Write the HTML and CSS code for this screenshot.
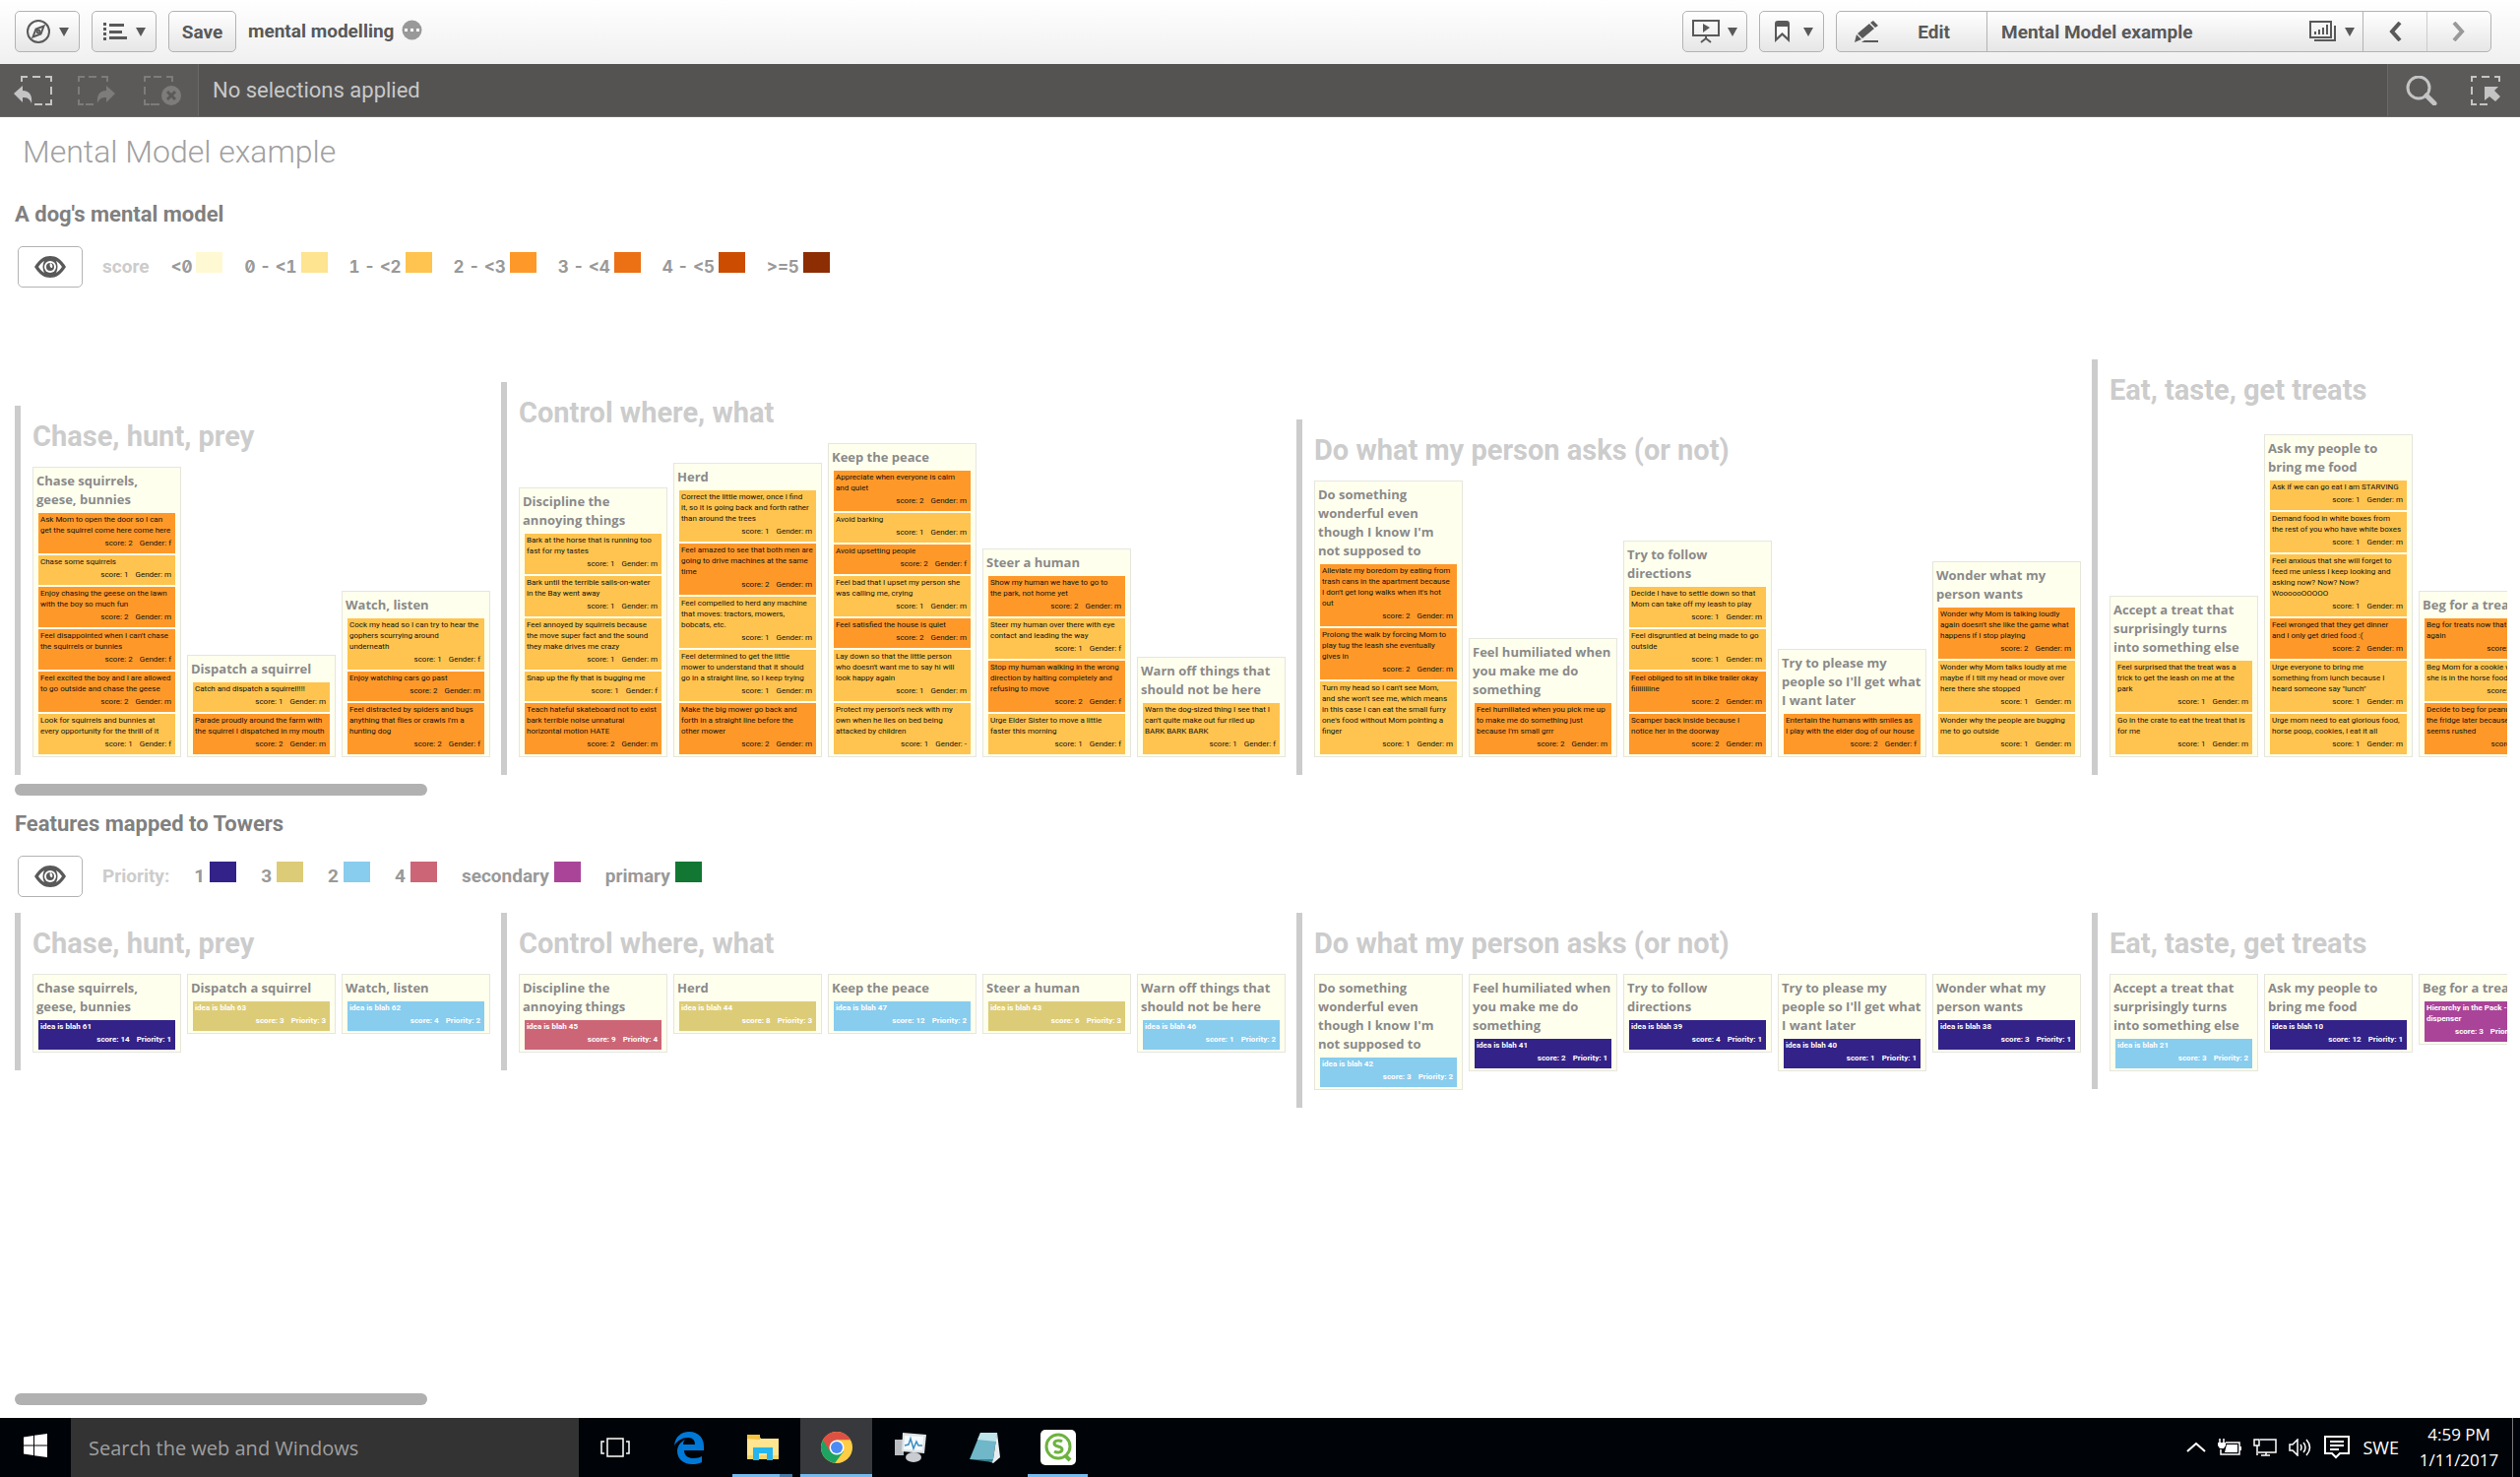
FILE: index.html
```html
<!DOCTYPE html>
<html lang="en">
<head>
<meta charset="utf-8">
<title>mental modelling</title>
<link rel="stylesheet" href="styles.css">
</head>
<body>
<svg class="defs" aria-hidden="true">
  <symbol id="eye" viewBox="0 0 34 24"><path d="M1 12C6 4 11 1 17 1s11 3 16 11c-5 8-10 11-16 11S6 20 1 12z" fill="#595959"/><path d="M5 12c2-3 4-5 6-6-2 4-2 8 0 12-2-1-4-3-6-6zM29 12c-2-3-4-5-6-6 2 4 2 8 0 12 2-1 4-3 6-6z" fill="#fff"/><circle cx="17" cy="12" r="6" fill="#fff"/><circle cx="17" cy="12" r="4" fill="#595959"/><path d="M17 8a4 4 0 0 1 2 5c-2 0-3-2-2-5z" fill="#fff"/></symbol>
  <symbol id="caret" viewBox="0 0 10 9"><path d="M0 0h10L5 9z" fill="#595959"/></symbol>
</svg>

<header class="toolbar">
  <button class="btn icon-btn" aria-label="Navigation">
    <svg width="26" height="24" viewBox="0 0 26 24" fill="none" stroke="#595959" stroke-width="2"><circle cx="13" cy="12" r="11"/><path d="M18.500 6.500l-3 8-8 3 3-8z"/><circle cx="13" cy="12" r="1.500"/></svg>
    <svg width="10" height="9"><use href="#caret"/></svg>
  </button>
  <button class="btn icon-btn" aria-label="Menu">
    <svg width="26" height="18" viewBox="0 0 26 18" fill="#595959"><path d="M1 0h3v3H1zM1 5h3v3H1zM1 10h3v3H1zM1 15h3v3H1zM7 1h15v3H7zM7 8h13v3H7zM7 14h18v3H7z"/></svg>
    <svg width="10" height="9"><use href="#caret"/></svg>
  </button>
  <button class="btn save">Save</button>
  <span class="app-name">mental modelling</span>
  <svg class="app-dots" width="21" height="21" viewBox="0 0 21 21"><circle cx="10.500" cy="10.500" r="10" fill="#999"/><path d="M3 9h3v3H3zM9 9h3v3H9zM15 9h3v3h-3z" fill="#fff"/></svg>
  <div class="tools">
    <button class="btn icon-btn" aria-label="Stories">
      <svg width="28" height="24" viewBox="0 0 28 24" fill="none" stroke="#595959" stroke-width="2"><path d="M1 1h26v15H1zM14 16v3M9 23l5-4 5 4"/><path d="M11 4l7 4-7 5z" fill="#595959" stroke="none"/></svg>
      <svg width="10" height="9"><use href="#caret"/></svg>
    </button>
    <button class="btn icon-btn" aria-label="Bookmarks">
      <svg width="26" height="24" viewBox="0 0 26 24"><path d="M5 23V4q0-3 3-3h9q3 0 3 3v19l-7.500-7z" fill="#595959"/><path d="M7 7h11v11l-5.500-5L7 18z" fill="#fafafa"/></svg>
      <svg width="10" height="9"><use href="#caret"/></svg>
    </button>
    <div class="group-bar">
      <button class="edit"><svg width="26" height="24" viewBox="0 0 26 24" fill="#595959"><path d="M4 14L16 4l5 5L9 19zM17 3l3-2 5 5-3 2zM3 15l5 5-7 3zM11 21h14v2H8z"/></svg><span>Edit</span></button>
      <button class="sheet"><span>Mental Model example</span><span class="sheet-icons"><svg width="28" height="22" viewBox="0 0 28 22" fill="none" stroke="#595959" stroke-width="2"><path d="M1 1h21v16H1zM5 20h21V5M6 14v-3M10 14V9M14 14V7M18 14V4"/></svg><svg width="10" height="9"><use href="#caret"/></svg></span></button>
      <button class="step" aria-label="Previous sheet"><svg width="14" height="20" viewBox="0 0 14 20" fill="none" stroke="#595959" stroke-width="4"><path d="M12 1L4 10l8 9"/></svg></button>
      <button class="step off" aria-label="Next sheet"><svg width="14" height="20" viewBox="0 0 14 20" fill="none" stroke="#999" stroke-width="4"><path d="M2 1l8 9-8 9"/></svg></button>
    </div>
  </div>
</header>

<nav class="selections">
  <div class="sel-tools">
    <button aria-label="Step back"><svg width="40" height="30" viewBox="0 0 40 30" fill="none" stroke="#c4c4c4" stroke-width="2"><path d="M8 6V1h6M19 1h8M32 1h6v5M38 11v8M38 24v5h-6M29 29h-8"/><path d="M0 18l9-8v5c7 0 10 5 9 13-2-5-4-6-9-6v5z" fill="#c4c4c4" stroke="none"/></svg></button>
    <button aria-label="Step forward"><svg width="40" height="30" viewBox="2 0 40 30" fill="none" stroke="#7d7c7b" stroke-width="2"><path d="M3 6V1h6M13 1h8M26 1h6v5M3 11v8M3 24v5h5M10 29h8"/><path d="M40 18l-9-8v5c-7 0-10 5-9 13 2-5 4-6 9-6v5z" fill="#7d7c7b" stroke="none"/></svg></button>
    <button aria-label="Clear all selections"><svg width="40" height="30" viewBox="3 0 40 30" fill="none" stroke="#7d7c7b" stroke-width="2"><path d="M4 6V1h6M13 1h8M26 1h6v5M4 11v8M4 24v5h5M10 29h9"/><circle cx="31" cy="20" r="10" fill="#7d7c7b" stroke="none"/><path d="M27 16l8 8M35 16l-8 8" stroke="#5b5a58" stroke-width="3"/></svg></button>
  </div>
  <p class="sel-text">No selections applied</p>
  <div class="sel-tools right">
    <button aria-label="Search"><svg width="32" height="30" viewBox="0 0 32 30" fill="none" stroke="#c4c4c4"><circle cx="13" cy="12" r="11" stroke-width="3"/><path d="M21 20l8 8" stroke-width="5" stroke-linecap="round"/></svg></button>
    <button aria-label="Selections tool"><svg width="32" height="30" viewBox="0 0 32 30" fill="none" stroke="#c4c4c4" stroke-width="2"><path d="M2 6V1h5M12 1h8M25 1h5v5M2 11v8M2 24v5h5M10 29h8"/><path d="M15 11h14l-4 4 6 6-5 5-6-5-5 4z" fill="#c4c4c4" stroke="none"/></svg></button>
  </div>
</nav>

<main>
  <h1>Mental Model example</h1>

  <div class="charts">
  <section class="chart">
    <h2>A dog's mental model</h2>
    <div class="legend-row">
      <button class="btn eye-btn" aria-label="Toggle view"><svg width="34" height="24"><use href="#eye"/></svg></button>
      <ul class="legend ranges">
        <li class="name">score</li>
        <li>&lt;0<i class="sw c0"></i></li>
        <li>0 - &lt;1<i class="sw c1"></i></li>
        <li>1 - &lt;2<i class="sw c2"></i></li>
        <li>2 - &lt;3<i class="sw c3"></i></li>
        <li>3 - &lt;4<i class="sw c4"></i></li>
        <li>4 - &lt;5<i class="sw c5"></i></li>
        <li>&gt;=5<i class="sw c6"></i></li>
      </ul>
    </div>
    <div class="board up">
      <section class="space">
        <h3>Chase, hunt, prey</h3>
        <div class="towers">
          <article class="tower"><h4>Chase squirrels,<br>geese, bunnies</h4>
            <div class="card c3">Ask Mom to open the door so I can<br>get the squirrel come here come here<p><span>score: 2</span><span>Gender: f</span></p></div>
            <div class="card c2">Chase some squirrels<p><span>score: 1</span><span>Gender: m</span></p></div>
            <div class="card c3">Enjoy chasing the geese on the lawn<br>with the boy so much fun<p><span>score: 2</span><span>Gender: m</span></p></div>
            <div class="card c3">Feel disappointed when I can't chase<br>the squirrels or bunnies<p><span>score: 2</span><span>Gender: f</span></p></div>
            <div class="card c3">Feel excited the boy and I are allowed<br>to go outside and chase the geese<p><span>score: 2</span><span>Gender: m</span></p></div>
            <div class="card c2">Look for squirrels and bunnies at<br>every opportunity for the thrill of it<p><span>score: 1</span><span>Gender: f</span></p></div>
          </article>
          <article class="tower"><h4>Dispatch a squirrel</h4>
            <div class="card c2">Catch and dispatch a squirrel!!!!<p><span>score: 1</span><span>Gender: m</span></p></div>
            <div class="card c3">Parade proudly around the farm with<br>the squirrel I dispatched in my mouth<p><span>score: 2</span><span>Gender: m</span></p></div>
          </article>
          <article class="tower"><h4>Watch, listen</h4>
            <div class="card c2">Cock my head so I can try to hear the<br>gophers scurrying around<br>underneath<p><span>score: 1</span><span>Gender: f</span></p></div>
            <div class="card c3">Enjoy watching cars go past<p><span>score: 2</span><span>Gender: m</span></p></div>
            <div class="card c3">Feel distracted by spiders and bugs<br>anything that flies or crawls I'm a<br>hunting dog<p><span>score: 2</span><span>Gender: f</span></p></div>
          </article>
        </div>
      </section>
      <section class="space">
        <h3>Control where, what</h3>
        <div class="towers">
          <article class="tower"><h4>Discipline the<br>annoying things</h4>
            <div class="card c2">Bark at the horse that is running too<br>fast for my tastes<p><span>score: 1</span><span>Gender: m</span></p></div>
            <div class="card c2">Bark until the terrible sails-on-water<br>in the Bay went away<p><span>score: 1</span><span>Gender: m</span></p></div>
            <div class="card c2">Feel annoyed by squirrels because<br>the move super fact and the sound<br>they make drives me crazy<p><span>score: 1</span><span>Gender: m</span></p></div>
            <div class="card c2">Snap up the fly that is bugging me<p><span>score: 1</span><span>Gender: f</span></p></div>
            <div class="card c3">Teach hateful skateboard not to exist<br>bark terrible noise unnatural<br>horizontal motion HATE<p><span>score: 2</span><span>Gender: m</span></p></div>
          </article>
          <article class="tower"><h4>Herd</h4>
            <div class="card c2">Correct the little mower, once I find<br>it, so it is going back and forth rather<br>than around the trees<p><span>score: 1</span><span>Gender: m</span></p></div>
            <div class="card c3">Feel amazed to see that both men are<br>going to drive machines at the same<br>time<p><span>score: 2</span><span>Gender: m</span></p></div>
            <div class="card c2">Feel compelled to herd any machine<br>that moves: tractors, mowers,<br>bobcats, etc.<p><span>score: 1</span><span>Gender: m</span></p></div>
            <div class="card c2">Feel determined to get the little<br>mower to understand that it should<br>go in a straight line, so I keep trying<p><span>score: 1</span><span>Gender: m</span></p></div>
            <div class="card c3">Make the big mower go back and<br>forth in a straight line before the<br>other mower<p><span>score: 2</span><span>Gender: m</span></p></div>
          </article>
          <article class="tower"><h4>Keep the peace</h4>
            <div class="card c3">Appreciate when everyone is calm<br>and quiet<p><span>score: 2</span><span>Gender: m</span></p></div>
            <div class="card c2">Avoid barking<p><span>score: 1</span><span>Gender: m</span></p></div>
            <div class="card c3">Avoid upsetting people<p><span>score: 2</span><span>Gender: f</span></p></div>
            <div class="card c2">Feel bad that I upset my person she<br>was calling me, crying<p><span>score: 1</span><span>Gender: m</span></p></div>
            <div class="card c3">Feel satisfied the house is quiet<p><span>score: 2</span><span>Gender: m</span></p></div>
            <div class="card c2">Lay down so that the little person<br>who doesn't want me to say hi will<br>look happy again<p><span>score: 1</span><span>Gender: m</span></p></div>
            <div class="card c2">Protect my person's neck with my<br>own when he lies on bed being<br>attacked by children<p><span>score: 1</span><span>Gender: -</span></p></div>
          </article>
          <article class="tower"><h4>Steer a human</h4>
            <div class="card c3">Show my human we have to go to<br>the park, not home yet<p><span>score: 2</span><span>Gender: m</span></p></div>
            <div class="card c2">Steer my human over there with eye<br>contact and leading the way<p><span>score: 1</span><span>Gender: f</span></p></div>
            <div class="card c3">Stop my human walking in the wrong<br>direction by halting completely and<br>refusing to move<p><span>score: 2</span><span>Gender: f</span></p></div>
            <div class="card c2">Urge Elder Sister to move a little<br>faster this morning<p><span>score: 1</span><span>Gender: f</span></p></div>
          </article>
          <article class="tower"><h4>Warn off things that<br>should not be here</h4>
            <div class="card c2">Warn the dog-sized thing I see that I<br>can't quite make out fur riled up<br>BARK BARK BARK<p><span>score: 1</span><span>Gender: f</span></p></div>
          </article>
        </div>
      </section>
      <section class="space">
        <h3>Do what my person asks (or not)</h3>
        <div class="towers">
          <article class="tower"><h4>Do something<br>wonderful even<br>though I know I'm<br>not supposed to</h4>
            <div class="card c3">Alleviate my boredom by eating from<br>trash cans in the apartment because<br>I don't get long walks when it's hot<br>out<p><span>score: 2</span><span>Gender: m</span></p></div>
            <div class="card c3">Prolong the walk by forcing Mom to<br>play tug the leash she eventually<br>gives in<p><span>score: 2</span><span>Gender: m</span></p></div>
            <div class="card c2">Turn my head so I can't see Mom,<br>and she won't see me, which means<br>in this case I can eat the small furry<br>one's food without Mom pointing a<br>finger<p><span>score: 1</span><span>Gender: m</span></p></div>
          </article>
          <article class="tower"><h4>Feel humiliated when<br>you make me do<br>something</h4>
            <div class="card c3">Feel humiliated when you pick me up<br>to make me do something just<br>because I'm small grrr<p><span>score: 2</span><span>Gender: m</span></p></div>
          </article>
          <article class="tower"><h4>Try to follow<br>directions</h4>
            <div class="card c2">Decide I have to settle down so that<br>Mom can take off my leash to play<p><span>score: 1</span><span>Gender: m</span></p></div>
            <div class="card c2">Feel disgruntled at being made to go<br>outside<p><span>score: 1</span><span>Gender: m</span></p></div>
            <div class="card c3">Feel obliged to sit in bike trailer okay<br>fiiiiiiiiine<p><span>score: 2</span><span>Gender: m</span></p></div>
            <div class="card c3">Scamper back inside because I<br>notice her in the doorway<p><span>score: 2</span><span>Gender: m</span></p></div>
          </article>
          <article class="tower"><h4>Try to please my<br>people so I'll get what<br>I want later</h4>
            <div class="card c3">Entertain the humans with smiles as<br>I play with the elder dog of our house<p><span>score: 2</span><span>Gender: f</span></p></div>
          </article>
          <article class="tower"><h4>Wonder what my<br>person wants</h4>
            <div class="card c3">Wonder why Mom is talking loudly<br>again doesn't she like the game what<br>happens if I stop playing<p><span>score: 2</span><span>Gender: m</span></p></div>
            <div class="card c2">Wonder why Mom talks loudly at me<br>maybe if I tilt my head or move over<br>here there she stopped<p><span>score: 1</span><span>Gender: m</span></p></div>
            <div class="card c2">Wonder why the people are bugging<br>me to go outside<p><span>score: 1</span><span>Gender: m</span></p></div>
          </article>
        </div>
      </section>
      <section class="space">
        <h3>Eat, taste, get treats</h3>
        <div class="towers tall">
          <article class="tower"><h4>Accept a treat that<br>surprisingly turns<br>into something else</h4>
            <div class="card c2">Feel surprised that the treat was a<br>trick to get the leash on me at the<br>park<p><span>score: 1</span><span>Gender: m</span></p></div>
            <div class="card c2">Go in the crate to eat the treat that is<br>for me<p><span>score: 1</span><span>Gender: m</span></p></div>
          </article>
          <article class="tower"><h4>Ask my people to<br>bring me food</h4>
            <div class="card c2">Ask if we can go eat I am STARVING<p><span>score: 1</span><span>Gender: m</span></p></div>
            <div class="card c2">Demand food in white boxes from<br>the rest of you who have white boxes<p><span>score: 1</span><span>Gender: m</span></p></div>
            <div class="card c2">Feel anxious that she will forget to<br>feed me unless I keep looking and<br>asking now? Now? Now?<br>WoooooOOOOO<p><span>score: 1</span><span>Gender: m</span></p></div>
            <div class="card c3">Feel wronged that they get dinner<br>and I only get dried food :(<p><span>score: 2</span><span>Gender: m</span></p></div>
            <div class="card c2">Urge everyone to bring me<br>something from lunch because I<br>heard someone say "lunch"<p><span>score: 1</span><span>Gender: m</span></p></div>
            <div class="card c2">Urge mom need to eat glorious food,<br>horse poop, cookies, I eat it all<p><span>score: 1</span><span>Gender: m</span></p></div>
          </article>
          <article class="tower"><h4>Beg for a treat</h4>
            <div class="card c3">Beg for treats now that<br>again<p><span>score: 2</span><span>Gender: m</span></p></div>
            <div class="card c2">Beg Mom for a cookie when<br>she is in the horse food<p><span>score: 1</span><span>Gender: m</span></p></div>
            <div class="card c3">Decide to beg for peanuts<br>the fridge later because<br>seems rushed<p><span>score: 2</span><span>Gender: f</span></p></div>
          </article>
        </div>
      </section>
    </div>
    <div class="scroll"></div>
  </section>

  <section class="chart">
    <h2>Features mapped to Towers</h2>
    <div class="legend-row">
      <button class="btn eye-btn" aria-label="Toggle view"><svg width="34" height="24"><use href="#eye"/></svg></button>
      <ul class="legend priorities">
        <li class="name">Priority:</li>
        <li>1<i class="sw p1"></i></li>
        <li>3<i class="sw p3"></i></li>
        <li>2<i class="sw p2"></i></li>
        <li>4<i class="sw p4"></i></li>
        <li>secondary<i class="sw ps"></i></li>
        <li>primary<i class="sw pp"></i></li>
      </ul>
    </div>
    <div class="board down">
      <section class="space">
        <h3>Chase, hunt, prey</h3>
        <div class="towers">
          <article class="tower"><h4>Chase squirrels,<br>geese, bunnies</h4><div class="card p1">idea is blah 61<p><span>score: 14</span><span>Priority: 1</span></p></div></article>
          <article class="tower"><h4>Dispatch a squirrel</h4><div class="card p3">idea is blah 63<p><span>score: 3</span><span>Priority: 3</span></p></div></article>
          <article class="tower"><h4>Watch, listen</h4><div class="card p2">idea is blah 62<p><span>score: 4</span><span>Priority: 2</span></p></div></article>
        </div>
      </section>
      <section class="space">
        <h3>Control where, what</h3>
        <div class="towers">
          <article class="tower"><h4>Discipline the<br>annoying things</h4><div class="card p4">idea is blah 45<p><span>score: 9</span><span>Priority: 4</span></p></div></article>
          <article class="tower"><h4>Herd</h4><div class="card p3">idea is blah 44<p><span>score: 8</span><span>Priority: 3</span></p></div></article>
          <article class="tower"><h4>Keep the peace</h4><div class="card p2">idea is blah 47<p><span>score: 12</span><span>Priority: 2</span></p></div></article>
          <article class="tower"><h4>Steer a human</h4><div class="card p3">idea is blah 43<p><span>score: 6</span><span>Priority: 3</span></p></div></article>
          <article class="tower"><h4>Warn off things that<br>should not be here</h4><div class="card p2">idea is blah 46<p><span>score: 1</span><span>Priority: 2</span></p></div></article>
        </div>
      </section>
      <section class="space">
        <h3>Do what my person asks (or not)</h3>
        <div class="towers">
          <article class="tower"><h4>Do something<br>wonderful even<br>though I know I'm<br>not supposed to</h4><div class="card p2">idea is blah 42<p><span>score: 3</span><span>Priority: 2</span></p></div></article>
          <article class="tower"><h4>Feel humiliated when<br>you make me do<br>something</h4><div class="card p1">idea is blah 41<p><span>score: 2</span><span>Priority: 1</span></p></div></article>
          <article class="tower"><h4>Try to follow<br>directions</h4><div class="card p1">idea is blah 39<p><span>score: 4</span><span>Priority: 1</span></p></div></article>
          <article class="tower"><h4>Try to please my<br>people so I'll get what<br>I want later</h4><div class="card p1">idea is blah 40<p><span>score: 1</span><span>Priority: 1</span></p></div></article>
          <article class="tower"><h4>Wonder what my<br>person wants</h4><div class="card p1">idea is blah 38<p><span>score: 3</span><span>Priority: 1</span></p></div></article>
        </div>
      </section>
      <section class="space">
        <h3>Eat, taste, get treats</h3>
        <div class="towers">
          <article class="tower"><h4>Accept a treat that<br>surprisingly turns<br>into something else</h4><div class="card p2">idea is blah 21<p><span>score: 3</span><span>Priority: 2</span></p></div></article>
          <article class="tower"><h4>Ask my people to<br>bring me food</h4><div class="card p1">idea is blah 10<p><span>score: 12</span><span>Priority: 1</span></p></div></article>
          <article class="tower"><h4>Beg for a treat</h4><div class="card ps">Hierarchy in the Pack - treat<br>dispenser<p><span>score: 3</span><span>Priority: secondary</span></p></div></article>
        </div>
      </section>
    </div>
    <div class="scroll"></div>
  </section>
  </div>
</main>

<footer class="taskbar">
  <button class="start" aria-label="Start"><svg width="24" height="24" viewBox="0 0 24 24" fill="#fff"><path d="M0 3.500l10-1.500v9.500H0zM11 1.800L24 0v11.500H11zM0 12.500h10V22L0 20.500zM11 12.500h13V24l-13-1.800z"/></svg></button>
  <input class="os-search" type="text" placeholder="Search the web and Windows" aria-label="Search the web and Windows">
  <div class="apps">
    <button aria-label="Task view"><svg width="30" height="20" viewBox="0 0 30 20" fill="none" stroke="#fff" stroke-width="2"><path d="M7 1h16v18H7zM4 4H1v12h3M26 4h3v12h-3" stroke-width="1.500"/></svg></button>
    <button aria-label="Edge"><svg width="32" height="34" viewBox="0 0 32 34"><path d="M1 15C2 6 8 1 16 1c10 0 15 7 15 15v4H11c0 6 5 8 9 8 4 0 7-1 9-2v6c-3 1.500-6 2-10 2C10 34 4 28 4 21c0-6 4-10 8-12-1.500 1.500-2 3-2 5h12c0-4-2-7-7-7-6 0-11 3-14 8z" fill="#0078d7"/></svg></button>
    <button class="run more" aria-label="File Explorer"><svg width="34" height="28" viewBox="0 0 34 28"><path d="M1 2h12l2 3h18v21H1z" fill="#ffe58f"/><path d="M1 5V1h13v5z" fill="#f5c242"/><path d="M1 22h32v4H1z" fill="#f8d568"/><path d="M7 27V14h20v13h-6v-7h-8v7z" fill="#26b5ee"/></svg></button>
    <button class="run on" aria-label="Chrome"><svg width="34" height="34" viewBox="0 0 34 34"><circle cx="17" cy="17" r="16" fill="#ffcd46"/><path d="M17 17L3 9.200A16 16 0 0 0 15 32.900L24 21z" fill="#1da462"/><path d="M3 9.200A16 16 0 0 1 31 9.200H17L10 21z" fill="#dd5144"/><circle cx="17" cy="17" r="7.500" fill="#fff"/><circle cx="17" cy="17" r="6" fill="#4c8bf5"/></svg></button>
    <button aria-label="Task Manager"><svg width="34" height="32" viewBox="0 0 34 32"><path d="M1 8h9v16H1z" fill="#b9bdc2"/><path d="M9 1l24 2-2 19-23-2z" fill="#dfe3e6"/><path d="M11 4l19 1-1 14-19-1z" fill="#f4fafe"/><path d="M11 14l4-1 2-6 3 10 3-7 2 4h4" fill="none" stroke="#3c8bc0" stroke-width="1.500"/><ellipse cx="20" cy="26" rx="8" ry="5" fill="#c9ccd0"/></svg></button>
    <button aria-label="Notepad"><svg width="34" height="34" viewBox="0 0 34 34"><path d="M13 2h17l-4 27H2z" fill="#6fb7c9"/><path d="M13 2h17l-1 9L10 9z" fill="#bfe3ea"/><path d="M30 2l3 25-7 6-4-2 4-2z" fill="#e8eef0"/><path d="M2 29l24 0-1 3z" fill="#3c7f90"/></svg></button>
    <button class="run" aria-label="Qlik Sense"><svg width="36" height="36" viewBox="0 0 36 36"><rect width="36" height="36" rx="5" fill="#fff"/><circle cx="18" cy="17" r="12" fill="none" stroke="#6cb33f" stroke-width="3"/><path d="M25 26l5 5" stroke="#6cb33f" stroke-width="4"/><path d="M22 12c-3-2-8-1-8 2 0 4 8 2 8 6 0 3-5 4-8 2" fill="none" stroke="#6cb33f" stroke-width="3"/></svg></button>
  </div>
  <div class="tray">
    <svg class="more-icons" width="20" height="10" viewBox="0 0 20 10" fill="none" stroke="#fff" stroke-width="2"><path d="M1 9l9-8 9 8"/></svg>
    <svg width="24" height="18" viewBox="0 0 24 18" fill="none" stroke="#fff" stroke-width="1.500"><path d="M8 4h14v12H3v-5M2 0v4M6 0v4M23.500 8v4"/><path d="M0 4h8v3l-2 3H2L0 7zM9 6h11v8H7z" fill="#fff" stroke="none"/></svg>
    <svg width="24" height="18" viewBox="0 0 24 18" fill="none" stroke="#fff" stroke-width="1.500"><path d="M7 1h16v13H5M1 1h5v6H1zM4 7v10M13 14v3M8 17h9"/></svg>
    <svg width="24" height="18" viewBox="0 0 24 18" fill="none" stroke="#fff" stroke-width="1.500"><path d="M1 6h3l5-5v16l-5-5H1zM12 6q2 3 0 6M15 4q4 5 0 10M18 1q7 8 0 16"/></svg>
    <svg width="26" height="24" viewBox="0 0 26 24" fill="none" stroke="#fff" stroke-width="2"><path d="M1 1h24v17h-9l-4 4-4-4H1zM6 6h14M6 10h14M6 14h9"/></svg>
    <span class="lang">SWE</span>
    <time class="clock">4:59 PM<br>1/11/2017</time>
  </div>
</footer>
</body>
</html>
```
FILE: styles.css
```css
* { box-sizing: border-box; margin: 0; padding: 0; }

body {
  display: flex;
  flex-direction: column;
  min-height: 100vh;
  background: #fff;
  color: #595959;
  font-family: Roboto, "Liberation Sans", sans-serif;
  overflow-x: hidden;
}

button { font: inherit; color: inherit; background: none; border: 0; }
ul { list-style: none; }
.defs { display: none; }

/* Top toolbar */
.toolbar {
  display: flex;
  align-items: flex-start;
  gap: 12px;
  height: 65px;
  padding: 11px 29px 0 15px;
  background: linear-gradient(#fff, #f0f0f0);
  font-size: 19px;
  font-weight: 700;
}
.btn, .group-bar {
  display: flex;
  align-items: center;
  justify-content: center;
  height: 42px;
  border: 1px solid #b3b3b3;
  border-radius: 5px;
  background: linear-gradient(#fff, #e6e6e6);
}
.icon-btn { width: 66px; gap: 8px; }
.save { width: 69px; }
.app-name { line-height: 42px; }
.app-dots { margin: 9px 0 0 -4px; }
.tools { display: flex; gap: 12px; margin-left: auto; }
.group-bar button { display: flex; align-items: center; height: 40px; border-left: 1px solid #b3b3b3; }
.group-bar .edit { width: 152px; padding: 0 37px 0 17px; justify-content: space-between; border-left: 0; }
.group-bar .sheet { width: 382px; padding: 0 8px 0 14px; justify-content: space-between; }
.sheet-icons { display: flex; align-items: center; gap: 8px; }
.group-bar .step { width: 65px; justify-content: center; }
.group-bar .off { border-color: #ccc; }

/* Selections bar */
.selections {
  display: flex;
  align-items: stretch;
  height: 54px;
  background: #545352;
  border-bottom: 1px solid #6a6968;
}
.sel-tools { display: flex; background: #5b5a58; border-right: 1px solid #6a6968; }
.sel-tools.right { border-right: 0; border-left: 1px solid #6a6968; }
.sel-tools button { display: flex; align-items: center; justify-content: center; width: 67px; }
.sel-tools button + button { padding-right: 3px; }
.sel-text { flex: 1; padding-left: 14px; color: #c8c8c8; font-size: 22px; line-height: 54px; }

/* Sheet */
main { flex: 1; display: flex; flex-direction: column; }
h1 { padding: 15px 23px 28px; color: #a0a0a0; font-size: 32px; font-weight: 300; line-height: 40px; }
.charts { flex: 1; display: grid; grid-template-columns: minmax(0, 1fr); grid-auto-rows: 1fr; }
.chart { display: flex; flex-direction: column; padding: 3px 13px 13px 15px; }
h2 { color: #808080; font-size: 22px; line-height: 26px; }
.legend-row { display: flex; gap: 20px; margin: 19px 0 16px 3px; }
.eye-btn { width: 66px; background: #fff; }
.legend { display: flex; align-items: baseline; height: 42px; padding-top: 6px; color: #999; font-size: 19px; font-weight: 700; line-height: 24px; }
.legend .name { color: #ccc; }
.ranges { gap: 22px; }
.ranges li:not(.name) { font-family: Inter, Roboto, sans-serif; font-size: 17px; font-feature-settings: "zero", "tnum"; }
.priorities { gap: 25px; }
.sw { display: inline-block; width: 27px; height: 21px; margin-left: 5px; }
.ranges .sw { margin-left: 4px; }

.board { flex: 1; display: flex; overflow: hidden; }
.up, .up .towers { align-items: flex-end; }
.down, .down .towers { align-items: flex-start; }
.space { flex: none; padding: 13px 11px 18px 12px; border-left: 6px solid #ccc; }
h3 { margin-bottom: 13px; color: #ccc; font-size: 29px; line-height: 36px; white-space: nowrap; }
.towers { display: flex; gap: 6px; }
.tall { min-height: 342px; }
.tower {
  display: flex;
  flex-direction: column;
  gap: 2px;
  width: 151px;
  padding: 4px 5px 2px;
  border: 1px solid #e6e6de;
  background: #ffffee;
}
h4 { margin: 0 -2px 2px; color: #8a8a8a; font-family: "Open Sans", Roboto, sans-serif; font-size: 13px; line-height: 19px; white-space: nowrap; }
.card { padding: 1px 4px 4px 2px; color: #111; font-size: 8px; line-height: 11px; white-space: nowrap; }
.card p { display: flex; justify-content: flex-end; gap: 7px; margin-top: 2px; line-height: 12px; }
.down .card { color: #fff; font-weight: 700; }

.c0 { background: #fff9d3; }
.c1 { background: #fee391; }
.c2 { background: #fec44f; }
.c3 { background: #fe9929; }
.c4 { background: #ec7014; }
.c5 { background: #cc4c02; }
.c6 { background: #8c2d04; }
.p1 { background: #332288; }
.p2 { background: #88ccee; }
.p3 { background: #ddcc77; }
.p4 { background: #cc6677; }
.ps { background: #aa4499; }
.pp { background: #117733; }

.scroll { width: 419px; height: 12px; margin-top: 9px; border-radius: 6px; background: #b1b1b1; }

/* Windows taskbar */
.taskbar {
  display: flex;
  align-items: stretch;
  height: 60px;
  padding-right: 7px;
  background: #000408;
  color: #fff;
  font-family: "Open Sans", "Noto Sans", sans-serif;
}
.start { width: 72px; }
.os-search { width: 516px; padding-left: 18px; border: 0; background: #333; color: #fff; font: 20px "Open Sans", "Noto Sans", sans-serif; }
.os-search::placeholder { color: #a0a0a0; opacity: 1; }
.apps { display: flex; }
.apps button { position: relative; display: flex; align-items: center; justify-content: center; width: 73px; margin-right: 2px; }
.apps .run::after { content: ""; position: absolute; left: 6px; right: 6px; bottom: 0; height: 3px; background: #76b9ed; }
.apps .more::after { background: linear-gradient(to right, #76b9ed 48px, #4a7ba4 48px); }
.apps .on { background: #38393d; }
.apps .on::after { left: 0; right: 0; }
.tray { display: flex; align-items: center; gap: 12px; margin-left: auto; border-right: 1px solid #777; padding-right: 9px; }
.lang { margin-left: 2px; font-size: 18px; }
.clock { width: 90px; margin-left: 4px; font-size: 17px; line-height: 26px; text-align: center; }
```
